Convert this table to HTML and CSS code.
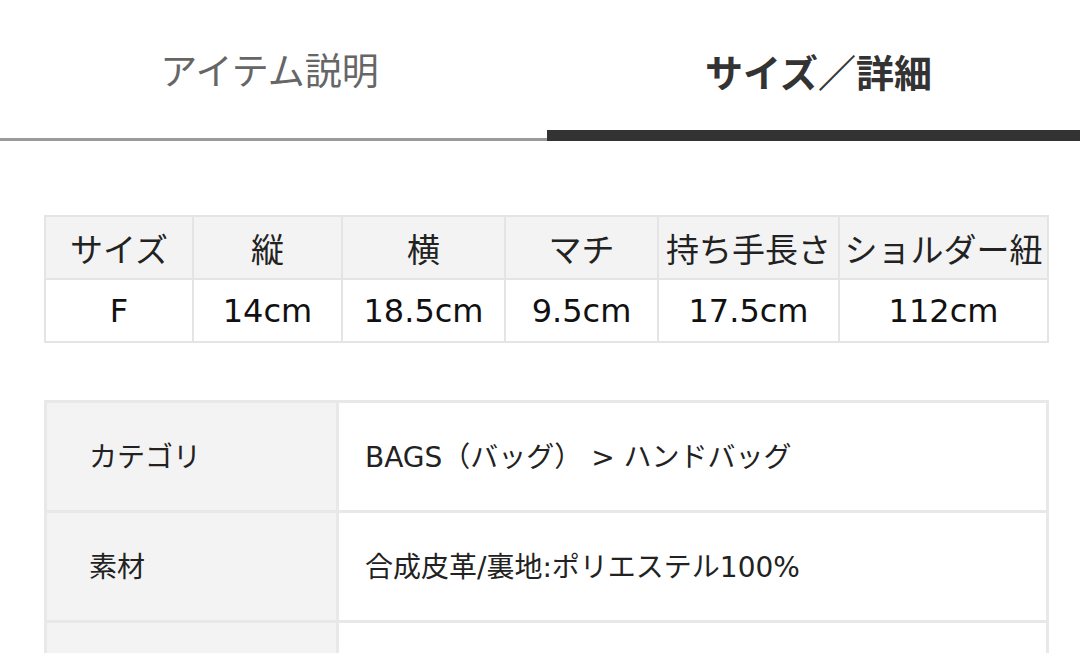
FILE: index.html
```html
<!DOCTYPE html>
<html lang="ja">
<head>
<meta charset="utf-8">
<link rel="stylesheet" href="styles.css">
</head>
<body>
<div class="tabs">
  <div class="tab">アイテム説明</div>
  <div class="tab active">サイズ／詳細</div>
</div>
<div class="content">
  <table class="size">
    <colgroup>
      <col style="width:148px"><col style="width:149px"><col style="width:163px"><col style="width:153px"><col style="width:181px"><col>
    </colgroup>
    <tr class="head">
      <th>サイズ</th><th>縦</th><th>横</th><th>マチ</th><th>持ち手長さ</th><th>ショルダー紐</th>
    </tr>
    <tr>
      <td>F</td><td>14cm</td><td>18.5cm</td><td>9.5cm</td><td>17.5cm</td><td>112cm</td>
    </tr>
  </table>
  <table class="detail">
    <colgroup><col style="width:292px"><col></colgroup>
    <tr><th>カテゴリ</th><td>BAGS（バッグ） &gt; ハンドバッグ</td></tr>
    <tr><th>素材</th><td>合成皮革/裏地:ポリエステル100%</td></tr>
    <tr><th></th><td></td></tr>
  </table>
</div>
</body>
</html>
```
FILE: styles.css
```css
html, body {
  margin: 0;
  padding: 0;
  background: #fff;
  font-family: "Noto Sans CJK JP", "Noto Sans", sans-serif;
  color: #222;
}
body { width: 1080px; height: 653px; overflow: hidden; }
.tabs {
  display: flex;
  align-items: flex-end;
  height: 141px;
}
.tab {
  box-sizing: border-box;
  display: flex;
  align-items: center;
  justify-content: center;
  font-size: 37px;
  color: #666;
}
.tab:first-child {
  width: 547px;
  height: 141px;
  padding-right: 8px;
  border-bottom: 3px solid #9b9b9b;
}
.tab.active {
  flex: 1;
  height: 141px;
  padding-top: 10px;
  padding-left: 10px;
  border-bottom: 11px solid #333;
  color: #333;
  font-weight: bold;
  font-size: 38px;
}
.content {
  padding: 74px 31px 0 44px;
}
table {
  border-collapse: collapse;
  table-layout: fixed;
  width: 1005px;
}
.size th, .size td {
  border: 2px solid #e4e4e4;
  text-align: center;
  padding: 0;
  white-space: nowrap;
}
.size th {
  height: 61px;
  background: #f3f3f3;
  font-weight: normal;
  font-size: 33px;
  color: #222;
}
.size td {
  height: 61px;
  font-family: "DejaVu Sans", "Noto Sans CJK JP", sans-serif;
  font-size: 32px;
  color: #111;
}
.detail {
  margin-top: 57px;
}
.detail th, .detail td {
  border: 3px solid #e8e8e8;
  height: 103px;
  font-size: 28px;
  font-weight: normal;
  text-align: left;
  padding: 0 0 4px 0;
  color: #222;
}
.detail th {
  background: #f3f3f3;
  padding-left: 42px;
}
.detail td {
  padding-left: 26px;
  font-family: "DejaVu Sans", "Noto Sans CJK JP", sans-serif;
}
```
